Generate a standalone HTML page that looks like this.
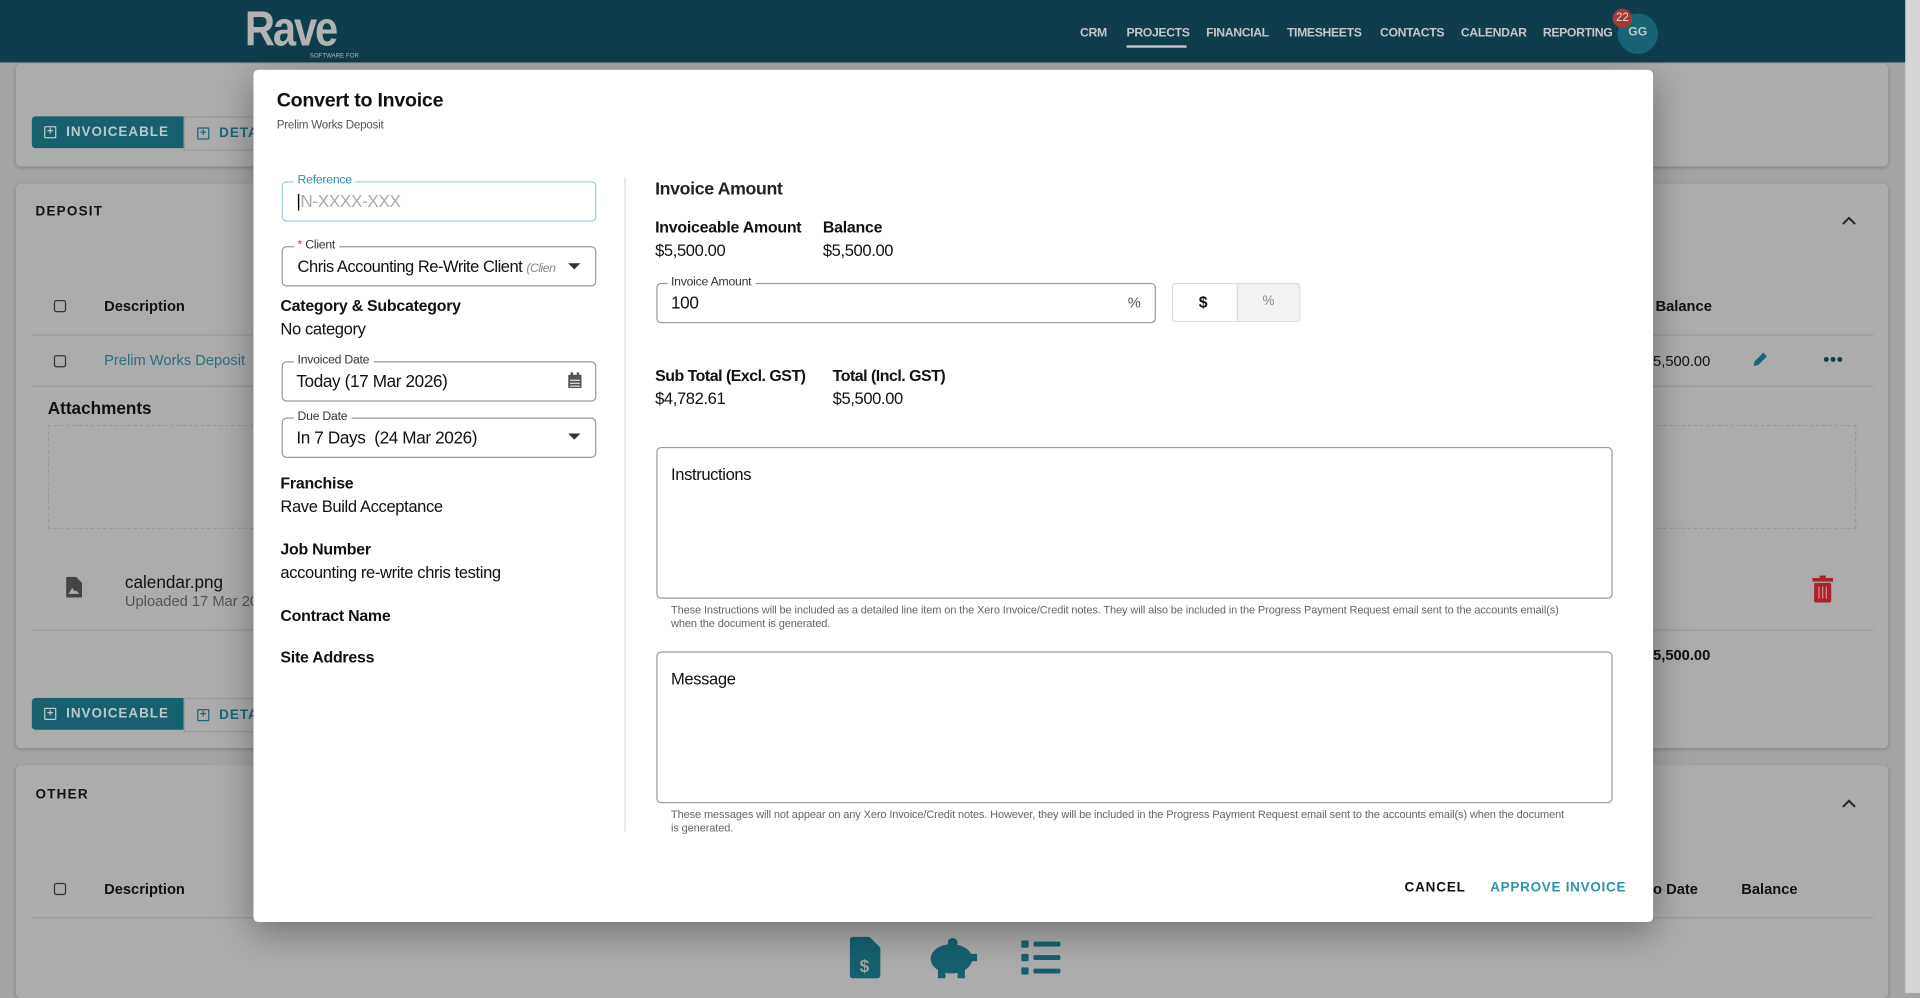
<!DOCTYPE html>
<html><head><meta charset="utf-8"><style>
*{box-sizing:border-box;margin:0;padding:0}
html,body{width:1920px;height:993px;overflow:hidden;background:#a4a4a4;font-family:"Liberation Sans",sans-serif}
#w{position:absolute;left:0;top:0;width:1568px;height:811px;transform:scale(1.22449);transform-origin:0 0;font-size:13px;color:#111}
.a{position:absolute}
.hdr{left:0;top:0;width:1556px;height:51px;background:#0e3d4b}
.nav{top:22px;font-size:10px;font-weight:bold;color:#c4c8c9;letter-spacing:-0.3px}
.card{background:#acacac;border-radius:4px;box-shadow:0 1px 3px rgba(0,0,0,.2)}
.btn1{background:#17616f;color:#b9c9cc;font-size:11px;font-weight:bold;letter-spacing:0.8px;padding:0 0 0 28px;line-height:26px;border-radius:3px 0 0 3px}
.btn2{color:#1a6575;font-size:11px;font-weight:bold;letter-spacing:0.8px;line-height:26px;border:1px solid #999}
.sq{position:absolute;left:10px;top:8px;width:10px;height:10px;border:1.3px solid currentColor;border-radius:1px;font-size:9px;line-height:7px;text-align:center;letter-spacing:0}
.cb{width:10px;height:10px;border:1.3px solid #333;border-radius:2px}
.modal{left:207px;top:57px;width:1143px;height:696px;background:#fff;border-radius:4px;box-shadow:0 8px 30px rgba(0,0,0,.35)}
.fld{border:1px solid #9a9a9a;border-radius:4px;background:#fff}
.lbl{font-size:10px;color:#333;background:#fff;padding:0 3px;letter-spacing:-0.2px}
.b{font-weight:bold;font-size:13px;letter-spacing:-0.2px}
.v{font-size:13.5px;letter-spacing:-0.3px}
.hint{font-size:9px;color:#666;line-height:11px;letter-spacing:-0.1px}
</style></head><body><div id="w">
<div class="a hdr"></div>
<div class="a" style="left:200px;top:2px;font-size:40px;font-weight:bold;color:#b3b3b3;letter-spacing:-2px;transform:scaleX(.85);transform-origin:0 0">Rave</div>
<div class="a" style="left:253px;top:43px;font-size:5px;color:#bbb">SOFTWARE FOR</div>
<div class="a nav" style="left:882px">CRM</div>
<div class="a nav" style="left:920px">PROJECTS</div>
<div class="a" style="left:920px;top:37px;width:49px;height:2px;background:#c4c8c9"></div>
<div class="a nav" style="left:985px">FINANCIAL</div>
<div class="a nav" style="left:1051px">TIMESHEETS</div>
<div class="a nav" style="left:1127px">CONTACTS</div>
<div class="a nav" style="left:1193px">CALENDAR</div>
<div class="a nav" style="left:1260px">REPORTING</div>
<div class="a" style="left:1321px;top:11px;width:33px;height:33px;border-radius:50%;background:#196474;color:#b9c9cc;font-size:10px;font-weight:bold;text-align:center;line-height:31px">GG</div>
<div class="a" style="left:1317px;top:7px;width:16px;height:16px;border-radius:50%;background:#a33a34;color:#ddd;font-size:9.5px;text-align:center;line-height:16px">22</div>
<div class="a" style="left:1556px;top:0;width:12px;height:811px;background:#d6d6d6"></div>

<div class="a card" style="left:13px;top:52px;width:1529px;height:84px"></div>
<div class="a btn1" style="left:26px;top:95px;width:124px"><span class="sq">+</span>INVOICEABLE</div>
<div class="a btn2" style="left:150px;top:95px;width:70px;padding-left:28px"><span class="sq">+</span>DETA</div>

<div class="a card" style="left:13px;top:150px;width:1529px;height:461px"></div>
<div class="a" style="left:29px;top:167px;font-size:11px;font-weight:bold;letter-spacing:1px">DEPOSIT</div>
<svg class="a" style="left:1503px;top:176px" width="14" height="9" viewBox="0 0 14 9"><path d="M2 7 L7 2 L12 7" stroke="#222" stroke-width="1.6" fill="none"/></svg>
<div class="a cb" style="left:44px;top:245px"></div>
<div class="a" style="left:85px;top:243px;font-size:12px;font-weight:bold">Description</div>
<div class="a" style="left:1352px;top:243px;font-size:12px;font-weight:bold">Balance</div>
<div class="a" style="left:26px;top:273px;width:1504px;height:1px;background:#999"></div>
<div class="a cb" style="left:44px;top:290px"></div>
<div class="a" style="left:85px;top:287px;font-size:12px;color:#2a6f7d">Prelim Works Deposit</div>
<div class="a" style="left:1350px;top:288px;font-size:12px">5,500.00</div>
<svg class="a" style="left:1429px;top:286px" width="16" height="16" viewBox="0 0 16 16"><path d="M3 13 L4 9 L11 2 L14 5 L7 12 Z" fill="#1a6575"/></svg>
<svg class="a" style="left:1489px;top:291px" width="16" height="5"><circle cx="2.5" cy="2.5" r="2" fill="#0e3d4b"/><circle cx="8" cy="2.5" r="2" fill="#0e3d4b"/><circle cx="13.5" cy="2.5" r="2" fill="#0e3d4b"/></svg>
<div class="a" style="left:26px;top:315px;width:1504px;height:1px;background:#999"></div>
<div class="a" style="left:39px;top:325px;font-size:14px;font-weight:bold">Attachments</div>
<div class="a" style="left:39px;top:347px;width:1477px;height:85px;border:1.5px dashed #999"></div>
<svg class="a" style="left:54px;top:471px" width="13" height="17" viewBox="0 0 13 17"><path d="M0 1 Q0 0 1 0 L8 0 L13 5 L13 16 Q13 17 12 17 L1 17 Q0 17 0 16 Z" fill="#444"/><path d="M2 14 L5 9 L7 12 L8 11 L11 14 Z" fill="#aaa"/></svg>
<div class="a" style="left:102px;top:467px;font-size:14px">calendar.png</div>
<div class="a" style="left:102px;top:484px;font-size:12px;color:#555">Uploaded 17 Mar 20</div>
<svg class="a" style="left:1480px;top:470px" width="17" height="22" viewBox="0 0 17 22"><rect x="0" y="2" width="17" height="3" fill="#a8232d"/><rect x="6" y="0" width="5" height="3" fill="#a8232d"/><rect x="1.5" y="6" width="14" height="16" rx="1.5" fill="#a8232d"/><path d="M5.5 9v10M8.5 9v10M11.5 9v10" stroke="#d88" stroke-width="1"/></svg>
<div class="a" style="left:26px;top:514px;width:1504px;height:1px;background:#999"></div>
<div class="a" style="left:1350px;top:528px;font-size:12px;font-weight:bold">5,500.00</div>
<div class="a btn1" style="left:26px;top:570px;width:124px"><span class="sq">+</span>INVOICEABLE</div>
<div class="a btn2" style="left:150px;top:570px;width:70px;padding-left:28px"><span class="sq">+</span>DETA</div>

<div class="a card" style="left:13px;top:625px;width:1529px;height:190px"></div>
<div class="a" style="left:29px;top:643px;font-size:11px;font-weight:bold;letter-spacing:1px">OTHER</div>
<svg class="a" style="left:1503px;top:652px" width="14" height="9" viewBox="0 0 14 9"><path d="M2 7 L7 2 L12 7" stroke="#222" stroke-width="1.6" fill="none"/></svg>
<div class="a cb" style="left:44px;top:721px"></div>
<div class="a" style="left:85px;top:719px;font-size:12px;font-weight:bold">Description</div>
<div class="a" style="left:1350px;top:719px;font-size:12px;font-weight:bold">o Date</div>
<div class="a" style="left:1422px;top:719px;font-size:12px;font-weight:bold">Balance</div>
<div class="a" style="left:26px;top:749px;width:1504px;height:1px;background:#999"></div>
<svg class="a" style="left:694px;top:765px" width="25" height="34" viewBox="0 0 25 34"><path d="M0 3 Q0 0 3 0 L16 0 L25 9 L25 31 Q25 34 22 34 L3 34 Q0 34 0 31 Z" fill="#15606e"/><text x="8" y="29" font-size="14" font-weight="bold" fill="#a4a4a4" font-family="Liberation Sans">$</text></svg>
<svg class="a" style="left:758px;top:765px" width="40" height="34" viewBox="0 0 40 34"><ellipse cx="19" cy="18" rx="17" ry="12" fill="#15606e"/><rect x="8" y="24" width="6" height="10" fill="#15606e"/><rect x="24" y="24" width="6" height="10" fill="#15606e"/><circle cx="20" cy="5" r="4" fill="#15606e"/><rect x="34" y="14" width="6" height="6" fill="#15606e"/></svg>
<svg class="a" style="left:834px;top:768px" width="32" height="28"><rect x="0" y="0" width="6" height="6" rx="1" fill="#15606e"/><rect x="10" y="1" width="22" height="4" rx="1" fill="#15606e"/><rect x="0" y="11" width="6" height="6" rx="1" fill="#15606e"/><rect x="10" y="12" width="22" height="4" rx="1" fill="#15606e"/><rect x="0" y="22" width="6" height="6" rx="1" fill="#15606e"/><rect x="10" y="23" width="22" height="4" rx="1" fill="#15606e"/></svg>

<div class="a modal">
<div class="a" style="left:19px;top:17px;font-size:16px;font-weight:bold;color:#111;letter-spacing:-0.2px">Convert to Invoice</div>
<div class="a" style="left:19px;top:40px;font-size:9.5px;color:#555;letter-spacing:-0.2px">Prelim Works Deposit</div>
<div class="a" style="left:303px;top:88px;width:1px;height:534px;background:#ddd"></div>

<div class="a fld" style="left:23px;top:91px;width:257px;height:33px;border:1.5px solid #9ccfd9"></div>
<div class="a lbl" style="left:33px;top:85px;color:#2a8fa5">Reference</div>
<div class="a" style="left:35px;top:99px;font-size:14px;color:#aaa;letter-spacing:-0.3px"><span style="color:#000">|</span>N-XXXX-XXX</div>

<div class="a fld" style="left:23px;top:144px;width:257px;height:33px"></div>
<div class="a lbl" style="left:33px;top:138px"><span style="color:#d33">*</span> Client</div>
<div class="a" style="left:36px;top:153px;font-size:13.5px;white-space:nowrap;letter-spacing:-0.4px">Chris Accounting Re-Write Client <i style="font-size:10px;color:#888">(Clien</i></div>
<div class="a" style="left:257px;top:158px;border:5px solid transparent;border-top:5px solid #333"></div>

<div class="a b" style="left:22px;top:185px">Category &amp; Subcategory</div>
<div class="a v" style="left:22px;top:204px">No category</div>

<div class="a fld" style="left:23px;top:238px;width:257px;height:33px"></div>
<div class="a lbl" style="left:33px;top:232px">Invoiced Date</div>
<div class="a v" style="left:35px;top:246px;font-size:14px">Today (17 Mar 2026)</div>
<svg class="a" style="left:257px;top:247px" width="11" height="13" viewBox="0 0 11 13"><rect x="0" y="2" width="11" height="11" rx="1" fill="#555"/><rect x="2" y="0" width="2" height="3" fill="#555"/><rect x="7" y="0" width="2" height="3" fill="#555"/><path d="M1.5 6.5h8M1.5 9h8M1.5 11.3h8" stroke="#fff" stroke-width=".8"/></svg>

<div class="a fld" style="left:23px;top:284px;width:257px;height:33px"></div>
<div class="a lbl" style="left:33px;top:278px">Due Date</div>
<div class="a v" style="left:35px;top:292px;font-size:14px">In 7 Days&nbsp; (24 Mar 2026)</div>
<div class="a" style="left:257px;top:297px;border:5px solid transparent;border-top:5px solid #333"></div>

<div class="a b" style="left:22px;top:330px">Franchise</div>
<div class="a v" style="left:22px;top:349px">Rave Build Acceptance</div>
<div class="a b" style="left:22px;top:384px">Job Number</div>
<div class="a v" style="left:22px;top:403px">accounting re-write chris testing</div>
<div class="a b" style="left:22px;top:438px">Contract Name</div>
<div class="a b" style="left:22px;top:472px">Site Address</div>

<div class="a" style="left:328px;top:90px;font-size:14.5px;font-weight:bold;color:#222;letter-spacing:-0.3px">Invoice Amount</div>
<div class="a b" style="left:328px;top:121px">Invoiceable Amount</div>
<div class="a b" style="left:465px;top:121px">Balance</div>
<div class="a v" style="left:328px;top:140px">$5,500.00</div>
<div class="a v" style="left:465px;top:140px">$5,500.00</div>

<div class="a fld" style="left:329px;top:174px;width:408px;height:33px"></div>
<div class="a lbl" style="left:338px;top:168px">Invoice Amount</div>
<div class="a v" style="left:341px;top:182px;font-size:14px">100</div>
<div class="a" style="left:714px;top:183px;font-size:12px;color:#555">%</div>
<div class="a" style="left:750px;top:174px;width:105px;height:32px;border:1px solid #ddd;border-radius:3px;overflow:hidden"><div class="a" style="left:52px;top:0;width:53px;height:32px;background:#f2f2f2;border-left:1px solid #ddd"></div><div class="a" style="left:21px;top:7px;font-weight:bold;font-size:13px">$</div><div class="a" style="left:73px;top:8px;font-size:11px;color:#888">%</div></div>

<div class="a b" style="left:328px;top:242px;letter-spacing:-0.4px">Sub Total (Excl. GST)</div>
<div class="a b" style="left:473px;top:242px;letter-spacing:-0.4px">Total (Incl. GST)</div>
<div class="a v" style="left:328px;top:261px">$4,782.61</div>
<div class="a v" style="left:473px;top:261px">$5,500.00</div>

<div class="a fld" style="left:329px;top:308px;width:781px;height:124px"></div>
<div class="a v" style="left:341px;top:323px">Instructions</div>
<div class="a hint" style="left:341px;top:436px;width:740px">These Instructions will be included as a detailed line item on the Xero Invoice/Credit notes. They will also be included in the Progress Payment Request email sent to the accounts email(s) when the document is generated.</div>
<div class="a fld" style="left:329px;top:475px;width:781px;height:124px"></div>
<div class="a v" style="left:341px;top:490px">Message</div>
<div class="a hint" style="left:341px;top:603px;width:730px">These messages will not appear on any Xero Invoice/Credit notes. However, they will be included in the Progress Payment Request email sent to the accounts email(s) when the document is generated.</div>

<div class="a" style="left:940px;top:662px;font-size:11px;font-weight:bold;letter-spacing:0.7px;color:#111">CANCEL</div>
<div class="a" style="left:1010px;top:662px;font-size:11px;font-weight:bold;letter-spacing:0.6px;color:#2a96ae">APPROVE INVOICE</div>
</div>
</div></body></html>
